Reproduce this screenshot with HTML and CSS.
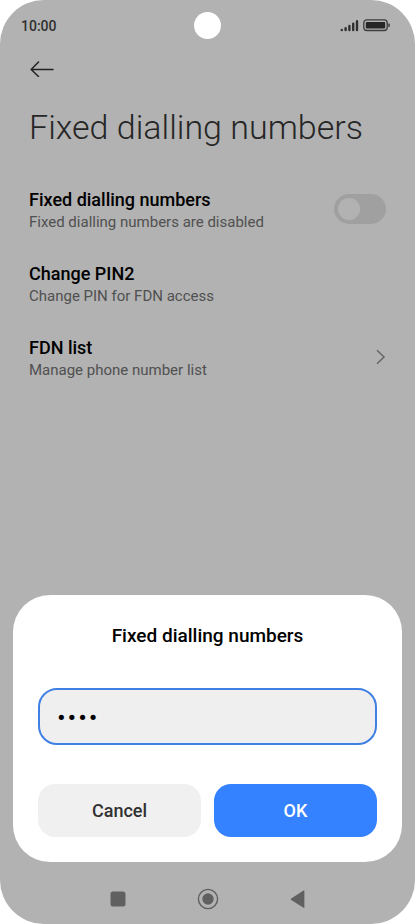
FILE: index.html
```html
<!DOCTYPE html>
<html lang="en">
<head>
<meta charset="utf-8">
<meta name="viewport" content="width=device-width, initial-scale=1">
<title>Fixed dialling numbers</title>
<link rel="stylesheet" href="styles.css">
</head>
<body>
<div class="phone">
  <header class="status">
    <span class="time">10:00</span>
    <span class="camera"></span>
    <svg class="indicators" width="50" height="14" viewBox="0 0 50 14" aria-hidden="true">
      <g stroke="#303030" stroke-width="2.4" stroke-linecap="round">
        <path d="M1.8 11V10.9M5.6 11V9.2M9.4 11V7M13.2 11V4.8M17 11V2.2"/>
      </g>
      <rect x="23.8" y=".9" width="23.4" height="10.6" rx="3" fill="none" stroke="#3c3c3c" stroke-width="1.3"/>
      <rect x="25.8" y="2.9" width="19.4" height="6.6" rx="1" fill="#262626"/>
      <path d="M48.3 4.5h.8q.7 0 .7.7v2q0 .7-.7.7h-.8z" fill="#3c3c3c"/>
    </svg>
  </header>
  <main class="settings">
    <a class="back" href="#" aria-label="Back">
      <svg width="26" height="16" viewBox="0 0 26 16" fill="none" stroke="#222" stroke-width="1.5" stroke-linecap="round" stroke-linejoin="round"><path d="M24 8.5H2.3M9.5 1L2.2 8.5l7.3 7"/></svg>
    </a>
    <h1>Fixed dialling numbers</h1>
    <div class="row">
      <label class="text" for="fdn"><span class="name">Fixed dialling numbers</span><span class="note">Fixed dialling numbers are disabled</span></label>
      <input class="switch" type="checkbox" role="switch" id="fdn">
    </div>
    <a class="row" href="#">
      <span class="text"><span class="name">Change PIN2</span><span class="note">Change PIN for FDN access</span></span>
    </a>
    <a class="row" href="#">
      <span class="text"><span class="name">FDN list</span><span class="note">Manage phone number list</span></span>
      <svg class="chevron" width="10" height="16" viewBox="0 0 10 16" fill="none" stroke="#696969" stroke-width="1.6"><path d="M1 1.2L8 8 1 14.8"/></svg>
    </a>
  </main>
  <form class="dialog" role="dialog" aria-labelledby="dialog-title">
    <h2 id="dialog-title">Fixed dialling numbers</h2>
    <input class="pin" type="password" value="1234" aria-label="PIN2">
    <div class="actions">
      <button class="cancel" type="button">Cancel</button>
      <button class="ok" type="button">OK</button>
    </div>
  </form>
  <nav class="keys">
    <button type="button" aria-label="Recent apps"><svg width="24" height="24" viewBox="0 0 24 24"><rect x="4.5" y="4.5" width="15" height="15" rx="2.5" fill="#606060"/></svg></button>
    <button type="button" aria-label="Home"><svg width="24" height="24" viewBox="0 0 24 24"><circle cx="12" cy="12" r="9.6" fill="none" stroke="#606060" stroke-width="1.4"/><circle cx="12" cy="12" r="5.7" fill="#606060"/></svg></button>
    <button type="button" aria-label="Back"><svg width="24" height="24" viewBox="0 0 24 24"><path d="M18.4 4v16.4q0 .8-.8.4L5.2 13q-1.1-.8 0-1.6L17.6 3.6q.8-.4.8.4z" fill="#606060"/></svg></button>
  </nav>
</div>
</body>
</html>
```
FILE: styles.css
```css
* {
  box-sizing: border-box;
}

body {
  margin: 0;
  background: #fff;
  font-family: Roboto, sans-serif;
  color: #000;
}

.phone {
  display: flex;
  flex-direction: column;
  min-height: 100vh;
  background: #b2b2b2;
  border-radius: 44px;
  overflow: hidden;
}

.status {
  display: grid;
  grid-template-columns: 1fr auto 1fr;
  align-items: center;
  height: 51px;
  padding: 0 25px 0 21px;
}

.time {
  font-size: 14px;
  font-weight: 500;
  color: #303030;
}

.camera {
  width: 27px;
  height: 27px;
  margin-left: 4px;
  border-radius: 50%;
  background: #fff;
}

.indicators {
  justify-self: end;
}

.settings {
  padding: 0 29px;
}

.back {
  display: block;
  width: 26px;
  height: 40px;
  padding-top: 10px;
}

.back svg,
.keys svg {
  display: block;
}

h1 {
  margin: 14px 0 38px;
  font-size: 34px;
  line-height: 44px;
  font-weight: 300;
  color: #262626;
  white-space: nowrap;
}

.row {
  display: flex;
  align-items: center;
  justify-content: space-between;
  height: 44px;
  margin-bottom: 30px;
  color: inherit;
  text-decoration: none;
}

.text {
  padding-top: 2px;
}

.name,
.note {
  display: block;
}

.name {
  font-size: 18px;
  line-height: 24px;
  font-weight: 500;
}

.note {
  font-size: 15px;
  line-height: 20px;
  color: #505050;
}

.switch {
  appearance: none;
  width: 52px;
  height: 30px;
  margin: 0;
  padding: 4px;
  border-radius: 15px;
  background: #a0a0a0;
}

.switch::before {
  content: "";
  display: block;
  width: 22px;
  height: 22px;
  border-radius: 50%;
  background: #b2b2b2;
}

.switch:checked::before {
  margin-left: auto;
}

.dialog {
  margin: auto 13px 0;
  padding: 25px;
  border-radius: 37px;
  background: #fff;
}

h2 {
  margin: 0 0 38px;
  padding-top: 1px;
  font-size: 19px;
  line-height: 29px;
  font-weight: 500;
  text-align: center;
}

.pin {
  display: block;
  width: 100%;
  height: 57px;
  padding: 1px 16px 0;
  border: 2px solid #4080e4;
  border-radius: 19px;
  outline: none;
  background: #efefef;
  color: #000;
  font-family: "DejaVu Sans", sans-serif;
  font-size: 18px;
}

.actions {
  display: grid;
  grid-template-columns: 1fr 1fr;
  gap: 13px;
  margin-top: 39px;
}

.actions button {
  height: 53px;
  border: 0;
  border-radius: 17px;
  font-family: Roboto, sans-serif;
  font-size: 18px;
  font-weight: 500;
}

.actions .cancel {
  background: #f0f0f0;
  color: #303030;
}

.actions .ok {
  background: #3482ff;
  color: #fff;
}

.keys {
  display: flex;
  justify-content: center;
  gap: 66px;
  padding: 25px 0 13px;
}

.keys button {
  padding: 0;
  border: 0;
  background: none;
}
```
